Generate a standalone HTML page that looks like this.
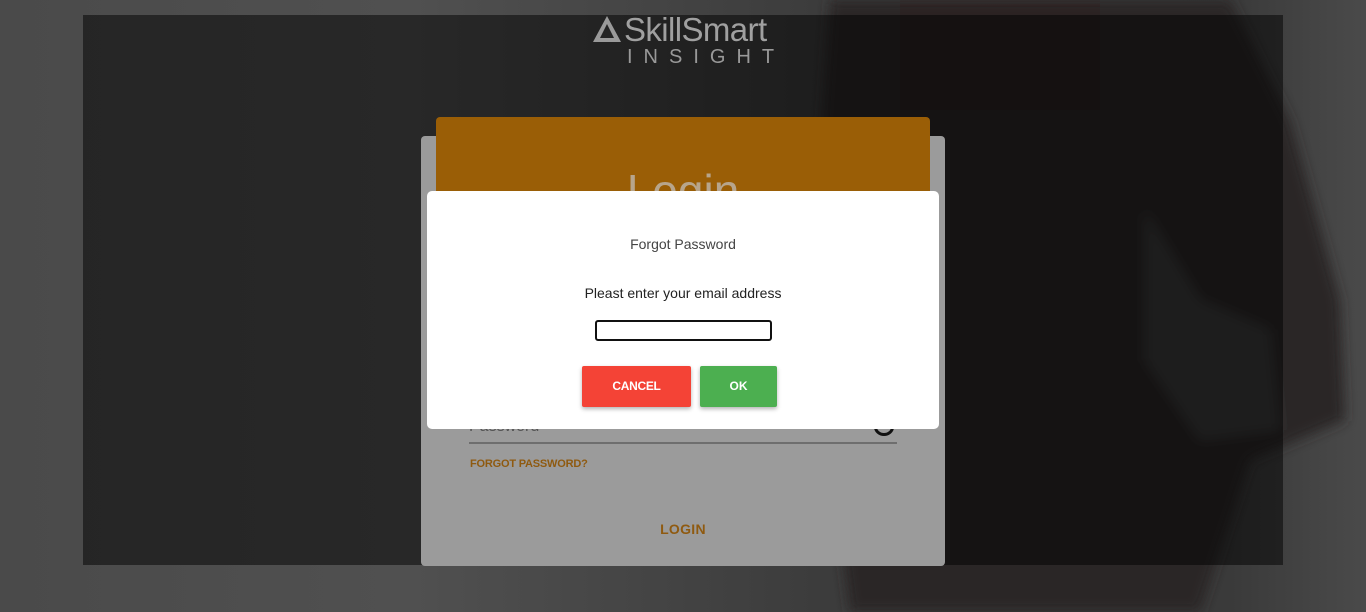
<!DOCTYPE html>
<html><head><meta charset="utf-8"><style>
*{margin:0;padding:0;box-sizing:border-box}
body{width:1366px;height:612px;overflow:hidden;position:relative;font-family:"Liberation Sans",sans-serif;background:linear-gradient(90deg,#4a4a4a 0%,#505050 30%,#3c3c3c 60%,#3a3a3a 90%,#4a4a4a 100%)}
.abs{position:absolute}
</style></head><body>
<svg class="abs" style="left:0;top:0" width="1366" height="612">
<defs><filter id="b" x="-20%" y="-20%" width="140%" height="140%"><feGaussianBlur stdDeviation="6"/></filter></defs>
<g filter="url(#b)">
<path d="M830 0 L1230 0 L1290 120 L1340 300 L1345 420 L1250 460 L1200 612 L850 612 L810 300 Z" fill="#2a2828"/>
<path d="M900 0 L1100 0 L1100 110 L900 110 Z" fill="#2c2222"/>
<path d="M1145 210 L1200 300 L1270 330 L1280 430 L1200 440 L1145 360 Z" fill="#3a3a3a"/>
</g>
</svg>
<div class="abs" style="left:83px;top:15px;width:1200px;height:550px;background:rgba(0,0,0,0.5)"></div>
<!-- logo -->
<svg class="abs" style="left:592px;top:15px" width="30" height="28"><path d="M15 1 L29 27 L1 27 Z M15 9 L8 23 L22 23 Z" fill="#9a9a9a" fill-rule="evenodd"/></svg>
<div class="abs" style="left:624px;top:11px;font-size:33px;color:#a0a0a0;letter-spacing:-0.6px">SkillSmart</div>
<div class="abs" style="left:627px;top:46px;font-size:20px;color:#999;letter-spacing:11px;font-weight:300">INSIGHT</div>
<!-- login card -->
<div class="abs" style="left:421px;top:136px;width:524px;height:430px;background:#9b9b9b;border-radius:4px"></div>
<div class="abs" style="left:436px;top:117px;width:494px;height:100px;background:#9a5e06;border-radius:4px"></div>
<div class="abs" style="left:436px;top:164px;width:494px;text-align:center;font-size:46px;color:#b7a58c;font-weight:100">Login</div>
<div class="abs" style="left:469px;top:418px;font-size:16px;color:#555">Password</div>
<div class="abs" style="left:874px;top:418px;width:20px;height:18px;border-radius:50%;border:3px solid #111"></div>
<div class="abs" style="left:469px;top:442px;width:428px;height:2px;background:#6e6e6e"></div>
<div class="abs" style="left:470px;top:458px;font-size:11px;font-weight:bold;color:#8f5a10;letter-spacing:-0.2px">FORGOT PASSWORD?</div>
<div class="abs" style="left:421px;top:521px;width:524px;text-align:center;font-size:14px;font-weight:bold;letter-spacing:0.3px;color:#8f5a10">LOGIN</div>
<!-- modal -->
<div class="abs" style="left:427px;top:191px;width:512px;height:238px;background:#fff;border-radius:5px"></div>
<div class="abs" style="left:427px;top:236px;width:512px;text-align:center;font-size:14px;color:#444;font-weight:300">Forgot Password</div>
<div class="abs" style="left:427px;top:285px;width:512px;text-align:center;font-size:14px;color:#222">Pleast enter your email address</div>
<div class="abs" style="left:595px;top:320px;width:177px;height:21px;border:2px solid #111;border-radius:3px"></div>
<div class="abs" style="left:582px;top:366px;width:109px;height:41px;background:#f44336;border-radius:2px;box-shadow:0 2px 4px rgba(0,0,0,.3);color:#fff;font-size:12px;font-weight:bold;text-align:center;line-height:41px;letter-spacing:-0.3px">CANCEL</div>
<div class="abs" style="left:700px;top:366px;width:77px;height:41px;background:#4caf50;border-radius:2px;box-shadow:0 2px 4px rgba(0,0,0,.3);color:#fff;font-size:12px;font-weight:bold;text-align:center;line-height:41px">OK</div>
</body></html>
